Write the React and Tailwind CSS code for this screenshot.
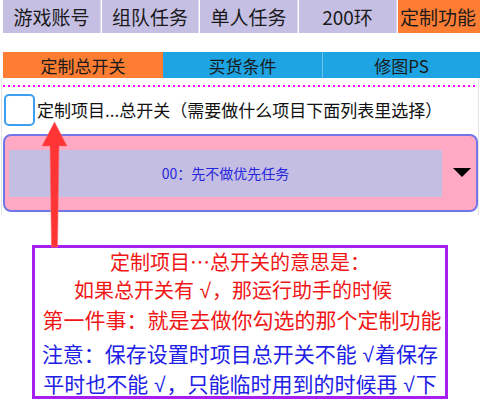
import React from "react";

const F = { fontFamily: '"Noto Sans CJK SC", "Noto Sans", sans-serif' };

function Ck() {
  return (
    <span className="font-['Liberation_Sans',sans-serif] text-[21px] mx-[1px]">√</span>
  );
}

export default function App() {
  const topTabs = [
    { t: "游戏账号", w: "w-[98px]" },
    { t: "组队任务", w: "w-[97px]" },
    { t: "单人任务", w: "w-[98px]" },
    { t: "200环", w: "w-[98px]" },
  ];
  return (
    <div
      className="relative w-[480px] h-[406px] overflow-hidden bg-white text-[#1a1a1a]"
      style={F}
    >
      {/* top tabs */}
      <div className="flex h-[33px] pl-[3px] gap-[1px] bg-white">
        {topTabs.map((x) => (
          <div
            key={x.t}
            className={`${x.w} flex items-center justify-center bg-[#c6bfe4] text-[19px] leading-none border-r border-[#ddd8ef]`}
          >
            {x.t}
          </div>
        ))}
        <div className="flex-1 flex items-center justify-center bg-[#fd7d33] text-[19px] leading-none pr-[2px]">
          定制功能
        </div>
      </div>

      {/* second tabs */}
      <div className="flex h-[26px] mt-[19px] pl-[3px]">
        <div className="w-[160px] flex items-center justify-center bg-[#fd7d33] text-[17px] leading-none">
          定制总开关
        </div>
        <div className="w-[160px] flex items-center justify-center bg-[#1ea4e2] text-[17px] leading-none border-r border-[#6cc4ee]">
          买货条件
        </div>
        <div className="flex-1 flex items-center justify-center bg-[#1ea4e2] text-[17px] leading-none">
          修图PS
        </div>
      </div>

      {/* panel */}
      <div className="mx-[1px] h-[137px] border-x border-[#e4e4e4] flex flex-col">
        <div className="mt-[7px] ml-[1px] mr-[3px] h-[2px] bg-[repeating-linear-gradient(90deg,#ff00ff_0_2px,transparent_2px_5px)]" />
        <div className="flex items-center mt-[6px] ml-[2px] h-[33px]">
          <div className="w-[31px] h-[32px] rounded-[5px] border-2 border-[#3d9ff0] bg-white" />
          <span className="ml-[2px] text-[17px] leading-none text-[#111]">
            定制项目...总开关（需要做什么项目下面列表里选择）
          </span>
        </div>
        <div className="mt-[8px] ml-[1px] h-[78px] rounded-[8px] border-2 border-[#7177e6] bg-[#ffa9c4] flex items-center">
          <div className="ml-[4px] w-[433px] h-[47px] bg-[#c5bee3] flex items-center justify-center text-[14px] text-[#2626dc] leading-none">
            00：先不做优先任务
          </div>
          <div className="flex-1 flex justify-center pl-[6px]">
            <svg width="18" height="10" viewBox="0 0 18 10">
              <polygon points="0,0 18,0 9,9" fill="#000" />
            </svg>
          </div>
        </div>
      </div>

      {/* note box */}
      <div className="mt-[30px] ml-[32px] w-[416px] h-[154px] border-[3px] border-[#a51ff0] flex flex-col items-center text-[20px]">
        <div className="leading-[28px] text-[#f01616]">定制项目…总开关的意思是：</div>
        <div className="leading-[28px] text-[#f01616] -ml-[14px]">
          如果总开关有 <Ck />，那运行助手的时候
        </div>
        <div className="leading-[28px] text-[#f01616] text-[21px] ml-[4px]">第一件事：就是去做你勾选的那个定制功能</div>
        <div className="mt-[6px] leading-[28px] text-[#2020e6] text-[21px]">
          注意：保存设置时项目总开关不能 <Ck />着保存
        </div>
        <div className="leading-[28px] text-[#2020e6] text-[21px]">
          平时也不能 <Ck />，只能临时用到的时候再 <Ck />下
        </div>
      </div>

      {/* red arrow */}
      <svg
        className="absolute left-0 top-0 pointer-events-none"
        width="480"
        height="406"
        viewBox="0 0 480 406"
      >
        <polygon
          points="54.5,122 67,146 59,146 57.5,247 51.5,247 50,146 42,146"
          fill="#ff3535"
          stroke="#ff6a6a"
          strokeWidth="0.6"
        />
      </svg>
    </div>
  );
}
